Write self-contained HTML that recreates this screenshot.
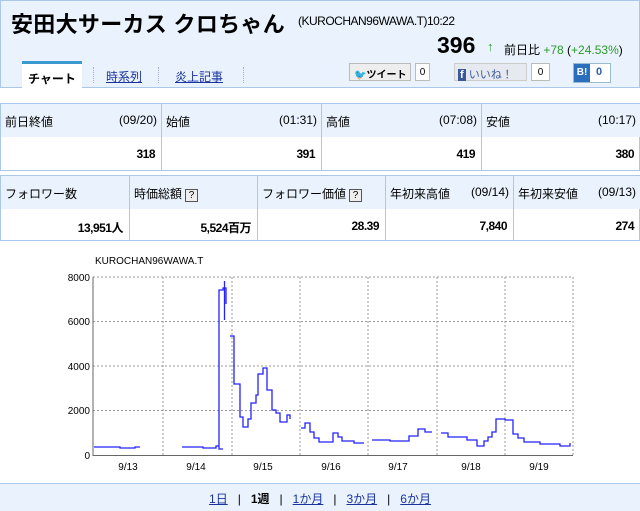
<!DOCTYPE html>
<html><head><meta charset="utf-8"><style>
*{margin:0;padding:0;box-sizing:border-box}
body{width:640px;height:511px;background:#fff;font-family:"Liberation Sans","Noto Sans CJK JP",sans-serif;color:#000;position:relative;overflow:hidden;font-size:12px}
.hdr{position:absolute;left:0;top:0;width:640px;height:88px;background:#eaf3fd;border:1px solid #a9c8ec}
.ab{position:absolute;white-space:nowrap}
a{color:#1a33a0}
.tbl{position:absolute;border:1px solid #a9c8ec}
.cell{position:absolute;top:0;height:100%;border-left:1px solid #a9c8ec}
.cell .h{height:33px;background:#eaf3fd;padding:9px 4px;font-size:12px;display:flex;justify-content:space-between}
.cell .v{text-align:right;padding:10px 6px;font-size:12px;font-weight:bold;letter-spacing:-0.5px}
.q{display:inline-block;width:13px;height:13px;border:1px solid #555;font-size:10px;line-height:11px;text-align:center;margin-left:3px;background:#eee}
</style></head><body>
<div class="hdr">
<div class="ab" style="left:10px;top:6px;font-size:22px;font-weight:bold;letter-spacing:0.3px">安田大サーカス クロちゃん</div>
<div class="ab" style="left:297px;top:13px;font-size:12px;letter-spacing:-0.5px">(KUROCHAN96WAWA.T)10:22</div>
<div class="ab" style="left:436px;top:31px;font-size:23px;font-weight:bold">396</div>
<div class="ab" style="left:486px;top:38px;font-size:13px;color:#2a9a2a">↑</div>
<div class="ab" style="left:503px;top:40px;font-size:12px">前日比 <span style="color:#2a9a2a">+78</span> (<span style="color:#2a9a2a">+24.53%</span>)</div>
<div class="ab" style="left:21px;top:60px;width:60px;height:28px;background:#fff;border-top:3px solid #3a9ad0;font-weight:bold;font-size:12px;padding:6px 0 0 6px">チャート</div>
<div class="ab" style="left:92px;top:66px;height:16px;border-left:1px dotted #aac"></div>
<div class="ab" style="left:105px;top:67px"><a href="#">時系列</a></div>
<div class="ab" style="left:157px;top:66px;height:16px;border-left:1px dotted #aac"></div>
<div class="ab" style="left:174px;top:67px"><a href="#">炎上記事</a></div>
<div class="ab" style="left:242px;top:66px;height:16px;border-left:1px dotted #aac"></div>
<div class="ab" style="left:348px;top:62px;width:62px;height:18px;border:1px solid #bbb;background:#eee;font-size:10px;font-weight:bold;padding:2px 4px"><span style="color:#2aa3e0">🐦</span>ツイート</div>
<div class="ab" style="left:414px;top:62px;width:15px;height:18px;border:1px solid #bbb;background:#fff;font-size:10px;text-align:center;padding-top:3px">0</div>
<div class="ab" style="left:453px;top:62px;width:73px;height:18px;border:1px solid #ccc;background:#e6e9f0;font-size:11px;color:#3b5998;padding:2px 3px"><span style="background:#3b5998;color:#fff;padding:0 2px;font-weight:bold">f</span> いいね！</div>
<div class="ab" style="left:530px;top:62px;width:19px;height:18px;border:1px solid #bbb;background:#fff;font-size:10px;text-align:center;padding-top:3px">0</div>
<div class="ab" style="left:572px;top:62px;width:38px;height:20px;border:1px solid #9bc;background:#fff;font-size:11px;font-weight:bold;color:#2a5fb0"><span style="display:inline-block;width:16px;height:18px;background:#2a6ebd;color:#fff;font-size:10px;text-align:center;padding-top:3px">B!</span><span style="margin-left:6px">0</span></div>
</div>

<div class="tbl" style="left:0;top:103px;width:640px;height:68px">
<div class="cell" style="left:-1px;width:161px"><div class="h"><span>前日終値</span><span>(09/20)</span></div><div class="v">318</div></div>
<div class="cell" style="left:160px;width:160px"><div class="h"><span>始値</span><span>(01:31)</span></div><div class="v">391</div></div>
<div class="cell" style="left:320px;width:160px"><div class="h"><span>高値</span><span>(07:08)</span></div><div class="v">419</div></div>
<div class="cell" style="left:480px;width:159px"><div class="h"><span>安値</span><span>(10:17)</span></div><div class="v">380</div></div>
</div>
<div class="tbl" style="left:0;top:175px;width:640px;height:66px">
<div class="cell" style="left:-1px;width:129px"><div class="h"><span>フォロワー数</span></div><div class="v">13,951人</div></div>
<div class="cell" style="left:128px;width:128px"><div class="h"><span>時価総額<span class="q">?</span></span></div><div class="v">5,524百万</div></div>
<div class="cell" style="left:256px;width:128px"><div class="h"><span>フォロワー価値<span class="q">?</span></span></div><div class="v">28.39</div></div>
<div class="cell" style="left:384px;width:128px"><div class="h"><span>年初来高値</span><span>(09/14)</span></div><div class="v">7,840</div></div>
<div class="cell" style="left:512px;width:127px"><div class="h"><span>年初来安値</span><span>(09/13)</span></div><div class="v">274</div></div>
</div>

<svg class="ab" style="left:0;top:250px" width="640" height="233" viewBox="0 250 640 233" font-family="Liberation Sans,sans-serif" font-size="10">
<text x="95" y="264">KUROCHAN96WAWA.T</text>
<g stroke="#999" stroke-dasharray="2,2" stroke-width="1">
<line x1="93" y1="277" x2="573" y2="277"/><line x1="93" y1="321.5" x2="573" y2="321.5"/><line x1="93" y1="366" x2="573" y2="366"/><line x1="93" y1="410.5" x2="573" y2="410.5"/>
<line x1="163" y1="277" x2="163" y2="455"/><line x1="232" y1="277" x2="232" y2="455"/><line x1="300" y1="277" x2="300" y2="455"/><line x1="368" y1="277" x2="368" y2="455"/><line x1="437" y1="277" x2="437" y2="455"/><line x1="505" y1="277" x2="505" y2="455"/><line x1="573" y1="277" x2="573" y2="455"/>
</g>
<line x1="93" y1="277" x2="93" y2="456" stroke="#666"/><line x1="93" y1="455.5" x2="573" y2="455.5" stroke="#666"/>
<g text-anchor="end"><text x="90" y="281">8000</text><text x="90" y="325">6000</text><text x="90" y="370">4000</text><text x="90" y="414">2000</text><text x="90" y="459">0</text></g>
<g text-anchor="middle"><text x="128" y="470">9/13</text><text x="196" y="470">9/14</text><text x="263" y="470">9/15</text><text x="331" y="470">9/16</text><text x="398" y="470">9/17</text><text x="471" y="470">9/18</text><text x="539" y="470">9/19</text></g>
<g fill="none" stroke="#2222ff" stroke-width="1.3">
<path d="M94 447H120V448H135V447H140"/>
<path d="M182 447H203V448H216V446H219V290H223V288H226V304M224.5 281V320M219 446V449H223"/>
<path d="M230 336H234V384H240V417H243V427H248V419H251V403H256V395H258V374H263V368H267V390H272V410H276V413H280V422H287V415H290V419"/>
<path d="M301 428H305V423H310V432H314V438H319V442H333V433H338V437H342V441H354V443H364"/>
<path d="M372 440H390V441H409V436H418V429H425V432H432"/>
<path d="M441 433H448V437H467V440H477V446H484V441H488V437H492V432H496V419H505V420H513V434H518V438H524V442H540V444H560V446H570V443"/>
</g>
</svg>

<div class="ab" style="left:0;top:483px;width:640px;height:28px;background:#eaf3fd;border-top:1px solid #a9c8ec;font-size:12px;text-align:center;padding-top:6px;word-spacing:0">
<a href="#">1日</a>&nbsp;&nbsp; | &nbsp;&nbsp;<b>1週</b>&nbsp;&nbsp; | &nbsp;&nbsp;<a href="#">1か月</a>&nbsp;&nbsp; | &nbsp;&nbsp;<a href="#">3か月</a>&nbsp;&nbsp; | &nbsp;&nbsp;<a href="#">6か月</a>
</div>
</body></html>
